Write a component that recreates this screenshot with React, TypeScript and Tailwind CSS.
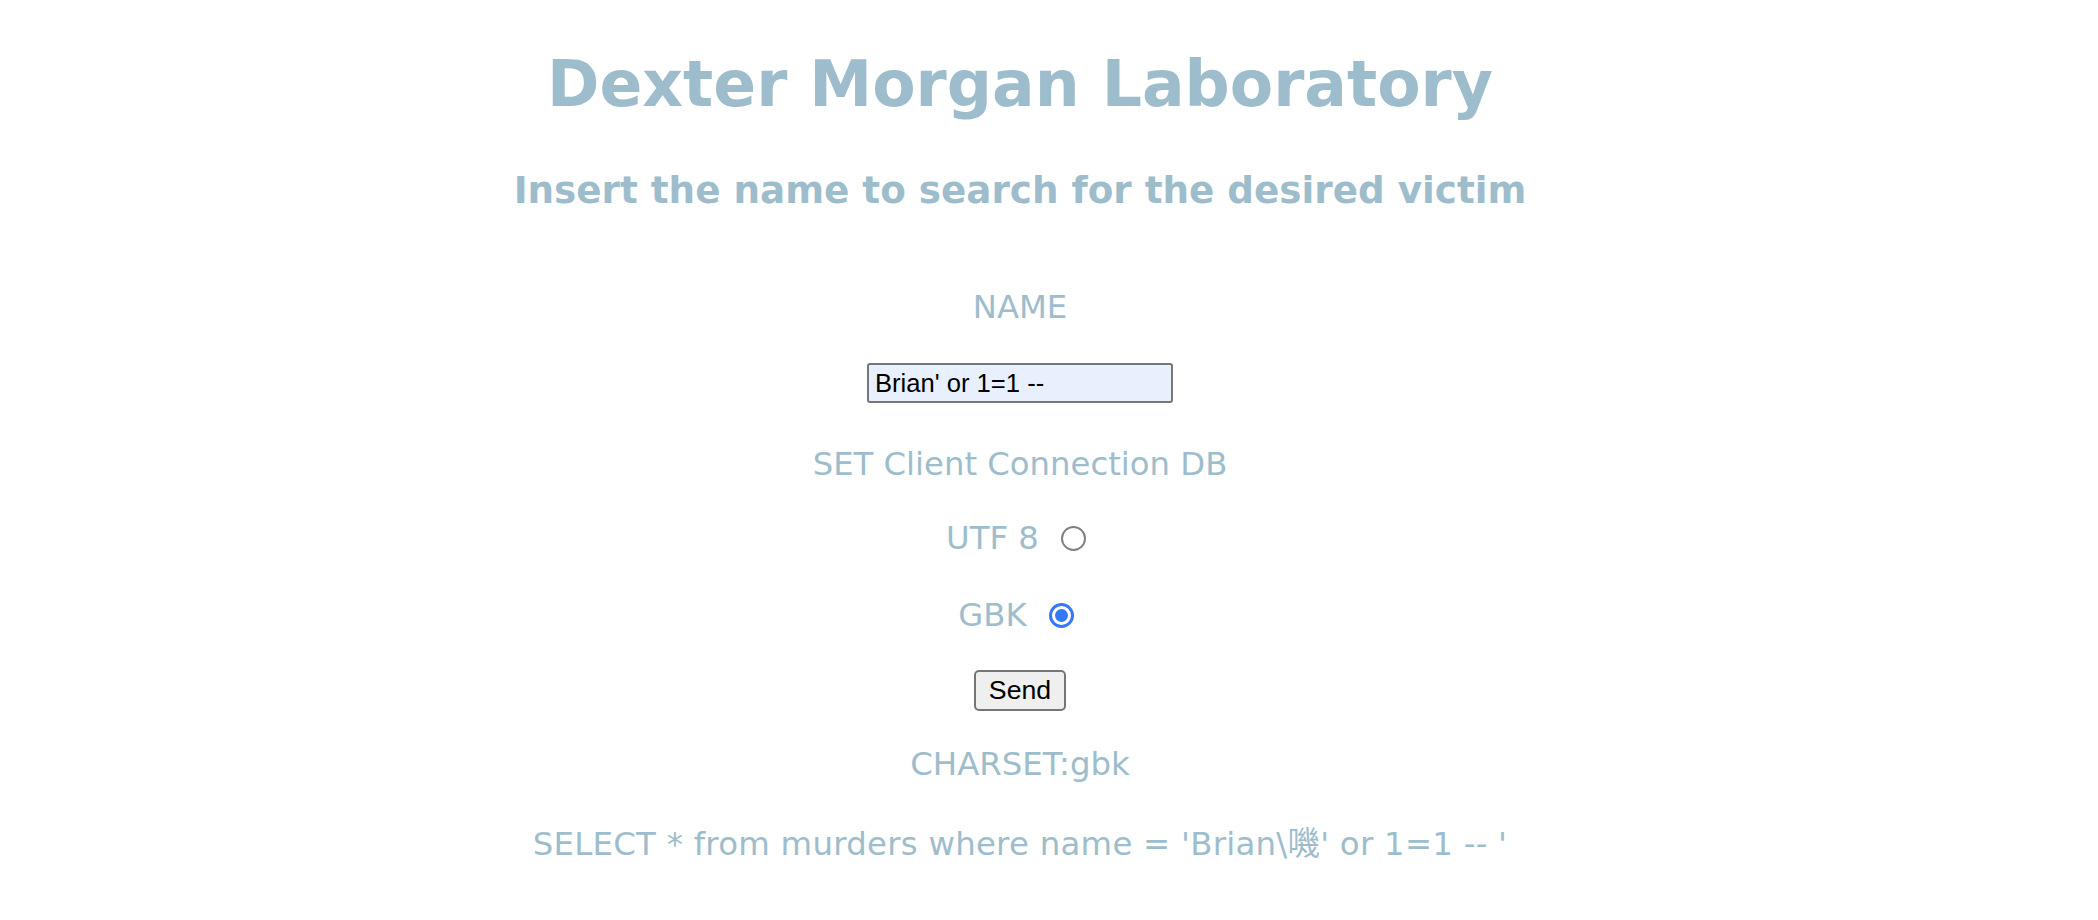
import React, { useState } from 'react';

const Radio: React.FC<{ checked: boolean; onClick: () => void }> = ({ checked, onClick }) => (
  <span
    onClick={onClick}
    className={`ml-[22px] mr-[8px] inline-flex h-[25px] w-[25px] shrink-0 items-center justify-center rounded-full bg-white ${
      checked ? 'border-[3px] border-[#3478f6]' : 'border-2 border-[#808080]'
    }`}
  >
    {checked && <span className="h-[13px] w-[13px] rounded-full bg-[#3478f6]"></span>}
  </span>
);

const App: React.FC = () => {
  const [charset, setCharset] = useState<'utf8' | 'gbk'>('gbk');

  return (
    <div className="min-h-[920px] bg-white">
      <div className="flex w-[2040px] flex-col items-center text-center text-[#9ebdcc] font-['DejaVu_Sans',Verdana,sans-serif]">
        <h1 className="mt-[46px] text-[63.2px] font-bold leading-[76px]">Dexter Morgan Laboratory</h1>
        <h3 className="mt-[46px] text-[37.3px] font-bold leading-[44px]">
          Insert the name to search for the desired victim
        </h3>

        <div className="mt-[76px] text-[32.3px] leading-[38px]">NAME</div>
        <input
          type="text"
          defaultValue="Brian' or 1=1 --"
          className="mt-[37px] h-[40px] w-[306px] rounded-[3px] border-2 border-[#767676] bg-[#e8f0fe] px-[6px] text-[25.6px] text-black outline-none font-['Liberation_Sans',Arial,sans-serif]"
        />

        <div className="mt-[42px] text-[32.3px] leading-[38px]">SET Client Connection DB</div>

        <div className="mt-[36px] flex h-[38px] items-center text-[32.3px] leading-[38px]">
          <span>UTF 8</span>
          <Radio checked={charset === 'utf8'} onClick={() => setCharset('utf8')} />
        </div>
        <div className="mt-[39px] flex h-[38px] items-center text-[32.3px] leading-[38px]">
          <span>GBK</span>
          <Radio checked={charset === 'gbk'} onClick={() => setCharset('gbk')} />
        </div>

        <button className="mt-[36px] h-[41px] w-[92px] rounded-[5px] border-2 border-[#767676] bg-[#efefef] text-[26.67px] leading-none text-black font-['Liberation_Sans',Arial,sans-serif]">
          Send
        </button>

        <div className="mt-[34px] text-[32.4px] leading-[38px]">CHARSET:gbk</div>
        <div className="mt-[42px] text-[32.4px] leading-[38px] tracking-[0.25px] font-['DejaVu_Sans','Noto_Sans_CJK_SC',sans-serif]">
          SELECT * from murders where name = 'Brian\嘰' or 1=1 -- '
        </div>
      </div>
    </div>
  );
};

export default App;
